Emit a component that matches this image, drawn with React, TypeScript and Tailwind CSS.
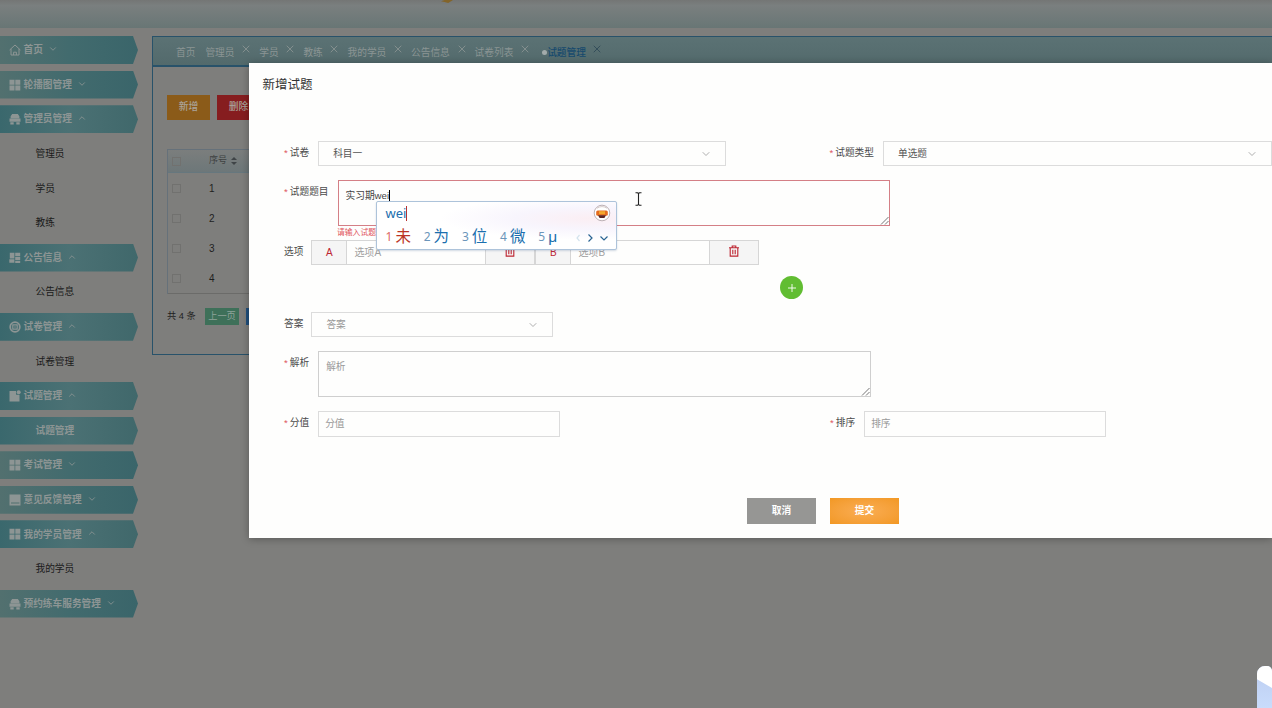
import { ChevronDown, ChevronUp, X } from "lucide-react";
import type { ReactNode } from "react";

type IconName = "home" | "grid" | "people" | "tiles" | "chip" | "note" | "book";

type MenuRow = {
  label: string;
  icon?: IconName;
  open?: boolean;
  active?: boolean;
};

const menu: MenuRow[] = [
  { label: "首页", icon: "home" },
  { label: "轮播图管理", icon: "grid" },
  { label: "管理员管理", icon: "people", open: true },
  { label: "管理员" },
  { label: "学员" },
  { label: "教练" },
  { label: "公告信息", icon: "tiles", open: true },
  { label: "公告信息" },
  { label: "试卷管理", icon: "chip", open: true },
  { label: "试卷管理" },
  { label: "试题管理", icon: "note", open: true },
  { label: "试题管理", active: true },
  { label: "考试管理", icon: "grid" },
  { label: "意见反馈管理", icon: "book" },
  { label: "我的学员管理", icon: "grid", open: true },
  { label: "我的学员" },
  { label: "预约练车服务管理", icon: "people" },
];

const tabs = ["管理员", "学员", "教练", "我的学员", "公告信息", "试卷列表"];

const candidates = ["未", "为", "位", "微", "μ"];

const iconShapes: Record<IconName, ReactNode> = {
  home: (
    <g fill="none" stroke="currentColor" strokeWidth="1">
      <path d="M0.6 6 6 1l5.4 5M2 5v6h8V5" />
      <path d="M4.6 11V8.2h2.8V11" />
    </g>
  ),
  grid: <path d="M0.5 0.8h5v5h-5zM6.3 0.8h5v5h-5zM0.5 6.4h5v5h-5zM6.3 6.4h5v5h-5z" />,
  people: (
    <path d="M3.2 1h5.6l1.6 2.2v2H1.6v-2zM0.5 5.6h11v3.2h-11zM1.3 9.2h3.4v2.2H1.3zM7.3 9.2h3.4v2.2H7.3z" />
  ),
  tiles: <path d="M0.8 0.8h4.6v5.6H0.8zM6.2 0.8h5v3.4h-5zM6.2 5h5v3h-5zM0.3 7.2h5.1v3.6H0.3zM6.2 8.7h5v2.4h-5z" />,
  chip: (
    <g fill="none" stroke="currentColor" strokeWidth="1.8">
      <circle cx="6" cy="6" r="4.8" />
      <path d="M3.8 3.8h4.4v4.4H3.8z" strokeWidth="1.2" />
      <path d="M6 5.2v1.6" strokeWidth="1" />
    </g>
  ),
  note: (
    <g>
      <path d="M0.5 1h6.6v3.8h3.4v6.6h-10z" />
      <circle cx="9.7" cy="2.2" r="2" />
    </g>
  ),
  book: <path fillRule="evenodd" d="M0.5 0.6h11v10.8h-11zM2 8.6v1h8.4v-1z" />,
};

function MenuIcon({ name }: { name: IconName }) {
  return (
    <svg viewBox="0 0 12 12" className="size-3 shrink-0" fill="currentColor">
      {iconShapes[name]}
    </svg>
  );
}

function Sidebar() {
  return (
    <nav className="flex w-[138px] shrink-0 flex-col gap-[6.6px] pt-2">
      {menu.map((row, index) => {
        if (!row.icon && !row.active) {
          return (
            <div
              key={index}
              className="flex h-7 shrink-0 items-center pl-[35.5px] pt-px text-[9.7px] text-[#1b1b1b]"
            >
              {row.label}
            </div>
          );
        }
        const Arrow = row.open ? ChevronUp : ChevronDown;
        return (
          <div
            key={index}
            className={`flex h-7 shrink-0 items-center text-[9.7px] font-bold text-[#8d9594] [clip-path:polygon(0_0,133px_0,138px_50%,133px_100%,0_100%)] ${
              row.open || row.active
                ? "bg-linear-to-r from-[#3a686d] via-[#4b7174] via-50% to-[#40686b]"
                : "bg-linear-to-r from-[#52706f] via-[#426b6e] via-50% to-[#3a656a]"
            } ${row.active ? "pl-[35.5px]" : "pl-[9px]"}`}
          >
            {row.icon && <MenuIcon name={row.icon} />}
            <span className={row.icon ? "ml-[2.5px] pt-px" : "pt-px"}>{row.label}</span>
            {row.icon && <Arrow className="mb-0.5 ml-[5px] size-2.5" strokeWidth={2} />}
          </div>
        );
      })}
    </nav>
  );
}

function TabBar() {
  return (
    <div className="flex h-[30px] items-center border-b-2 border-[#28526a] bg-linear-to-b from-[#5b7274] to-[#536a6c] pl-[23px] text-[9.7px] text-[#8b9594]">
      <span className="mr-2.5 pt-1">首页</span>
      {tabs.map((tab) => (
        <span key={tab} className="mr-[7.1px] flex items-center">
          <span className="pt-1">{tab}</span>
          <X className="mb-1 ml-[5.7px] size-3" strokeWidth={1.7} />
        </span>
      ))}
      <span className="ml-1 flex items-center text-[#174a6d]">
        <span className="mt-1 size-[5px] rounded-full bg-[#a3abab]" />
        <span className="pt-1 font-medium">试题管理</span>
        <X className="mb-1 ml-[5px] size-3 text-[#2e4856]" strokeWidth={1.7} />
      </span>
    </div>
  );
}

function CheckBox() {
  return <span className="ml-1 size-[9px] border border-[#71716f]" />;
}

function ContentPanel() {
  return (
    <section className="ml-3.5 mt-2 h-[319px] flex-1 border-y border-l border-[#28526a]">
      <TabBar />
      <div className="pl-3.5 pt-7">
        <div className="flex gap-[7px] text-[9.7px] font-medium text-[#aaa49b]">
          <div className="flex h-[25px] w-[43px] items-center justify-center bg-[#8b5b19]">新增</div>
          <div className="flex h-[25px] w-[43px] items-center justify-center bg-[#861d1f]">删除</div>
        </div>
        <div className="mt-[29px] border-l border-t border-[#66717a]">
          <div className="flex h-[23px] items-center border-b border-[#66777e] bg-linear-to-b from-[#7b7e7d] to-[#6d7779]">
            <CheckBox />
            <span className="ml-7 text-[9px] text-[#3f4242]">序号</span>
            <span className="ml-1 flex flex-col gap-0.5">
              <span className="border-x-[3px] border-b-[3px] border-x-transparent border-b-[#3f4447]" />
              <span className="border-x-[3px] border-t-[3px] border-x-transparent border-t-[#3f4447]" />
            </span>
          </div>
          {[1, 2, 3, 4].map((n) => (
            <div key={n} className="flex h-[30px] items-center text-[10px] text-[#1e1e1e]">
              <CheckBox />
              <span className="ml-7 w-2">{n}</span>
            </div>
          ))}
          <div className="h-px bg-[#6b6b69]" />
        </div>
        <div className="mt-3.5 flex items-center text-[9.2px] text-[#1e1e1e]">
          <span className="w-[38px] whitespace-nowrap pt-px">共 4 条</span>
          <span className="flex h-[17px] w-[34px] items-center justify-center bg-[#3e7059] pt-px text-[9.2px] text-[#8fa39a]">
            上一页
          </span>
          <span className="ml-[7px] h-[17px] w-[17px] bg-[#204f7d]" />
        </div>
      </div>
    </section>
  );
}

function Label({ text, required }: { text: string; required?: boolean }) {
  return (
    <span className="shrink-0 whitespace-nowrap text-[9.7px] leading-[23px] text-[#4b4b4b]">
      {required && <span className="mr-0.5 text-[#dd5560]">*</span>}
      {text}
    </span>
  );
}

function SelectBox({ value, className }: { value: string; className: string }) {
  return (
    <div className={`flex h-[25px] items-center justify-between border border-[#dcdcdc] pl-3.5 ${className}`}>
      <span className="pt-0.5">{value}</span>
      <ChevronDown className="mr-[13px] size-3 text-[#999]" strokeWidth={1.6} />
    </div>
  );
}

function ResizeGrip() {
  return (
    <svg
      viewBox="0 0 9 9"
      className="absolute bottom-0 right-0 size-[9px]"
      stroke="#666"
      strokeWidth="0.9"
    >
      <path d="M1 8.5 8.5 1M5 8.5 8.5 5" />
    </svg>
  );
}

function Trash() {
  return (
    <svg viewBox="0 0 12 12" className="size-3" fill="none" stroke="#bd2430" strokeWidth="1.1">
      <path d="M1 2.7h10M4.2 2.5V1h3.6v1.5M2.2 2.9v8.2h7.6V2.9M4.8 4.8v4.4M7.2 4.8v4.4" />
    </svg>
  );
}

function OptionField({ letter, wide }: { letter: string; wide?: boolean }) {
  return (
    <div className="flex h-[25px] border border-[#d6d6d6] text-[10px]">
      <span className="flex w-[35px] items-center justify-center border-r border-[#d6d6d6] bg-[#f5f5f5] text-[#bd2430]">
        {letter}
      </span>
      <span
        className={`flex items-center pl-[7px] text-[#a0a0a0] ${wide ? "w-[138px]" : "w-[138px]"}`}
      >
        选项{letter}
      </span>
      <span className="flex w-[49px] items-center justify-center border-l border-[#d6d6d6] bg-[#f5f5f5] pb-[3px]">
        <Trash />
      </span>
    </div>
  );
}

function ImePopup() {
  return (
    <div className="absolute left-[126.5px] top-[138px] h-[49px] w-[241px] rounded-[2px] border border-[#adc3da] bg-white bg-radial-[at_90%_35%] from-[#fbeef3] via-[#f8f5fd] via-25% to-white to-50% shadow-[0_1px_2px_rgba(80,110,150,0.25)]">
      <div className="flex h-[22px] items-center justify-between pl-[9px] pr-[5px]">
        <span className="flex items-center font-['Noto_Sans',sans-serif] text-[13px] leading-none text-[#1b6fae]">
          wei
          <span className="h-[15px] w-px bg-[#b83232]" />
        </span>
        <svg viewBox="0 0 18 18" className="size-[18px]">
          <circle cx="9" cy="9" r="7.8" fill="#fff" stroke="#b6a9ae" strokeWidth="0.9" />
          <path d="M4 4.2Q9 1 14 4.2" fill="none" stroke="#c5b5b5" strokeWidth="0.7" />
          <rect x="3.2" y="6.5" width="11.6" height="5.2" rx="1.5" fill="#e56b1f" />
          <rect x="6" y="7.2" width="6" height="3" fill="#f4a82d" />
          <path d="M5 11.2h8L11.4 14H6.6z" fill="#5a2425" />
        </svg>
      </div>
      <div className="flex h-[25px] items-center pl-[9px] text-[#1b6fae]">
        {candidates.map((word, i) => (
          <span
            key={word}
            className={`flex w-[38.2px] shrink-0 items-center gap-[3px] leading-none ${
              i === 0 ? "text-[#bb3325]" : ""
            }`}
          >
            <span
              className={`font-['Noto_Sans',sans-serif] text-[12px] ${
                i === 0 ? "text-[#dc6a65]" : "text-[#6b95ba]"
              }`}
            >
              {i + 1}
            </span>
            <span className="text-[15.5px]">{word}</span>
          </span>
        ))}
        <svg viewBox="0 0 36 10" className="-ml-px mt-0.5 h-2.5 w-9" fill="none" strokeWidth="1.2">
          <path d="M4.5 2 2 5l2.5 3" stroke="#d4e3ee" />
          <path d="M13.5 1.5 17 5l-3.5 3.5" stroke="#2a6493" />
          <path d="M25.5 3.5 29 7l3.500-3.500" stroke="#2a6493" />
        </svg>
      </div>
    </div>
  );
}

function QuestionDialog() {
  return (
    <div className="absolute left-[249px] top-[63px] h-[475px] w-[1023px] bg-[#fefefd] text-[9.7px] text-[#555] shadow-[0_1px_8px_rgba(0,0,0,0.3)]">
      <h2 className="pl-[13.5px] pt-[13px] text-[12.5px] leading-[19px] text-[#333]">新增试题</h2>

      <div className="mt-[46px] flex pl-[35px]">
        <div className="flex w-[546px] gap-[9px]">
          <Label text="试卷" required />
          <SelectBox value="科目一" className="w-[408px]" />
        </div>
        <div className="flex gap-[9px]">
          <Label text="试题类型" required />
          <SelectBox value="单选题" className="w-[389px]" />
        </div>
      </div>

      <div className="mt-3.5 flex gap-[9px] pl-[35px]">
        <Label text="试题题目" required />
        <div className="relative h-[46px] w-[552px] border border-[#d47f86] pl-[7px] pt-[7px] leading-[15px] text-[#444]">
          <span className="flex items-center">
            实习期wei
            <span className="h-[11px] w-px bg-black" />
          </span>
          <ResizeGrip />
        </div>
      </div>
      <p className="h-3.5 pl-[88px] text-[7.8px] leading-[13px] text-[#e0535b]">请输入试题</p>

      <div className="flex pl-[35px]">
        <div className="mr-2">
          <Label text="选项" />
        </div>
        <OptionField letter="A" />
        <OptionField letter="B" wide />
      </div>

      <div className="mt-[11px] flex pl-[531px]">
        <button className="flex size-[23px] items-center justify-center rounded-full bg-[#61bd32]">
          <svg viewBox="0 0 10 10" className="size-2.5" stroke="#fff" strokeWidth="0.9">
            <path d="M5 1v8M1 5h8" />
          </svg>
        </button>
      </div>

      <div className="mt-[13px] flex gap-2 pl-[35px] text-[#999]">
        <Label text="答案" />
        <SelectBox value="答案" className="w-[242px]" />
      </div>

      <div className="mt-3.5 flex gap-[9px] pl-[35px] text-[#999]">
        <Label text="解析" required />
        <div className="relative h-[46px] w-[553px] border border-[#cfcfcf] pl-[7px] pt-[7px] leading-[15px]">
          解析
          <ResizeGrip />
        </div>
      </div>

      <div className="mt-3.5 flex pl-[35px] text-[#999]">
        <div className="flex w-[546px] gap-[9px]">
          <Label text="分值" required />
          <div className="flex h-[26px] w-[242px] items-center border border-[#dcdcdc] pl-1.5 pt-px">分值</div>
        </div>
        <div className="flex gap-[9px]">
          <Label text="排序" required />
          <div className="flex h-[26px] w-[242px] items-center border border-[#dcdcdc] pl-1.5 pt-px">排序</div>
        </div>
      </div>

      <div className="mt-[61px] flex gap-3.5 pl-[498px] font-bold text-white">
        <button className="h-[26px] w-[69px] bg-[#969694] pt-px">取消</button>
        <button className="h-[26px] w-[69px] bg-radial from-[#faad52] to-[#f29822] pt-px">提交</button>
      </div>

      <ImePopup />

      {/* text cursor hovering over the question field */}
      <svg
        viewBox="0 0 7 14"
        className="absolute left-[386px] top-[129px] h-3.5 w-[7px]"
        fill="none"
        stroke="#222"
        strokeWidth="1.1"
      >
        <path d="M0.5 0.7h2L3.5 1.5l1-0.800h2M3.5 1.5v11M0.5 13.3h2l1-0.800 1 0.800h2" />
      </svg>
    </div>
  );
}

export default function App() {
  return (
    <div className="relative h-[708px] w-[1272px] overflow-hidden bg-[#7e7e7c] font-['Liberation_Sans','Noto_Sans_CJK_SC',sans-serif]">
      <header className="h-7 bg-linear-to-b from-[#747675] via-[#7a7f7f] via-20% to-[#687675]">
        <div className="ml-[441px] h-[3px] w-3 bg-[#83642a] [clip-path:polygon(0_40%,30%_0,100%_0,60%_100%,30%_70%)]" />
      </header>
      <div className="flex">
        <Sidebar />
        <ContentPanel />
      </div>
      <QuestionDialog />
      {/* floating helper peeking in at the corner */}
      <div className="absolute bottom-0 right-0 h-[42px] w-[15px] overflow-hidden rounded-tl-[8px] rounded-tr-[5px] bg-linear-to-b from-[#bccdf0] to-[#c9dcfc]">
        <div className="h-[22px] bg-white [clip-path:polygon(0_0,100%_0,100%_100%,0_60%)]" />
      </div>
    </div>
  );
}
